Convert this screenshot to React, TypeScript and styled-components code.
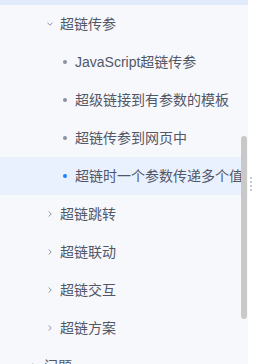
import React from "react";
import styled, { createGlobalStyle } from "styled-components";

const Global = createGlobalStyle`
  html, body { margin: 0; padding: 0; background: #ffffff; overflow: hidden; }
  body { font-family: "Liberation Sans", "Noto Sans CJK SC", sans-serif; }
`;

const Page = styled.div`
  display: flex;
  width: 272px;
  height: 364px;
  overflow: hidden;
`;

const Panel = styled.div`
  width: 248px;
  height: 364px;
  background: #f7f8fc;
  display: flex;
  flex-direction: column;
  flex-shrink: 0;
`;

const TopEdge = styled.div`
  height: 5px;
  background: #e1ebfc;
  flex-shrink: 0;
`;

const Body = styled.div`
  flex: 1;
  display: flex;
  min-height: 0;
`;

const List = styled.ul`
  list-style: none;
  margin: 0;
  padding: 0;
  width: 241px;
  flex-shrink: 0;
  overflow: hidden;
`;

const Row = styled.li<{ $indent: number; $active?: boolean }>`
  height: 38px;
  display: flex;
  align-items: center;
  padding-left: ${(p) => p.$indent}px;
  background: ${(p) => (p.$active ? "#eaf1fe" : "transparent")};
  color: #515767;
  font-size: 14px;
  white-space: nowrap;
  overflow: hidden;
`;

const Chevron = styled.span`
  width: 8px;
  height: 8px;
  display: inline-flex;
  align-items: center;
  justify-content: center;
  margin-right: 6px;
  flex-shrink: 0;
  color: #8a919f;
`;

const Dot = styled.span<{ $active?: boolean }>`
  width: 4px;
  height: 4px;
  border-radius: 50%;
  background: ${(p) => (p.$active ? "#1e80ff" : "#8a919f")};
  margin-right: 8px;
  flex-shrink: 0;
`;

const Label = styled.span`
  line-height: 20px;
`;

const Track = styled.div`
  width: 7px;
  flex-shrink: 0;
`;

const Thumb = styled.div`
  margin-top: 131px;
  width: 6px;
  height: 183px;
  border-radius: 3px;
  background: #c9c9c9;
`;

const Gutter = styled.div`
  flex: 1;
  display: flex;
  align-items: center;
  padding-left: 2px;
  padding-top: 3px;
`;

const Handle = styled.div`
  display: flex;
  flex-direction: column;
  gap: 2px;
`;

const HandleDot = styled.span`
  width: 2px;
  height: 2px;
  background: #c5cad3;
`;

const ChevronIcon = ({ dir }: { dir: "down" | "right" }) => (
  <svg width="8" height="8" viewBox="0 0 8 8" fill="none">
    {dir === "down" ? (
      <path d="M1.5 2.8 L4 5.2 L6.5 2.8" stroke="currentColor" strokeWidth="1" />
    ) : (
      <path d="M2.8 1.5 L5.2 4 L2.8 6.5" stroke="currentColor" strokeWidth="1" />
    )}
  </svg>
);

type Item =
  | { kind: "group"; text: string; indent: number; open?: boolean }
  | { kind: "leaf"; text: string; active?: boolean };

const items: Item[] = [
  { kind: "group", text: "超链传参", indent: 46, open: true },
  { kind: "leaf", text: "JavaScript超链传参" },
  { kind: "leaf", text: "超级链接到有参数的模板" },
  { kind: "leaf", text: "超链传参到网页中" },
  { kind: "leaf", text: "超链时一个参数传递多个值", active: true },
  { kind: "group", text: "超链跳转", indent: 46 },
  { kind: "group", text: "超链联动", indent: 46 },
  { kind: "group", text: "超链交互", indent: 46 },
  { kind: "group", text: "超链方案", indent: 46 },
  { kind: "group", text: "问题", indent: 30 },
];

export default function App() {
  return (
    <Page>
      <Global />
      <Panel>
        <TopEdge />
        <Body>
          <List>
            {items.map((it, i) =>
              it.kind === "group" ? (
                <Row key={i} $indent={it.indent}>
                  <Chevron>
                    <ChevronIcon dir={it.open ? "down" : "right"} />
                  </Chevron>
                  <Label>{it.text}</Label>
                </Row>
              ) : (
                <Row key={i} $indent={63} $active={it.active}>
                  <Dot $active={it.active} />
                  <Label>{it.text}</Label>
                </Row>
              )
            )}
          </List>
          <Track>
            <Thumb />
          </Track>
        </Body>
      </Panel>
      <Gutter>
        <Handle>
          <HandleDot />
          <HandleDot />
          <HandleDot />
          <HandleDot />
        </Handle>
      </Gutter>
    </Page>
  );
}
